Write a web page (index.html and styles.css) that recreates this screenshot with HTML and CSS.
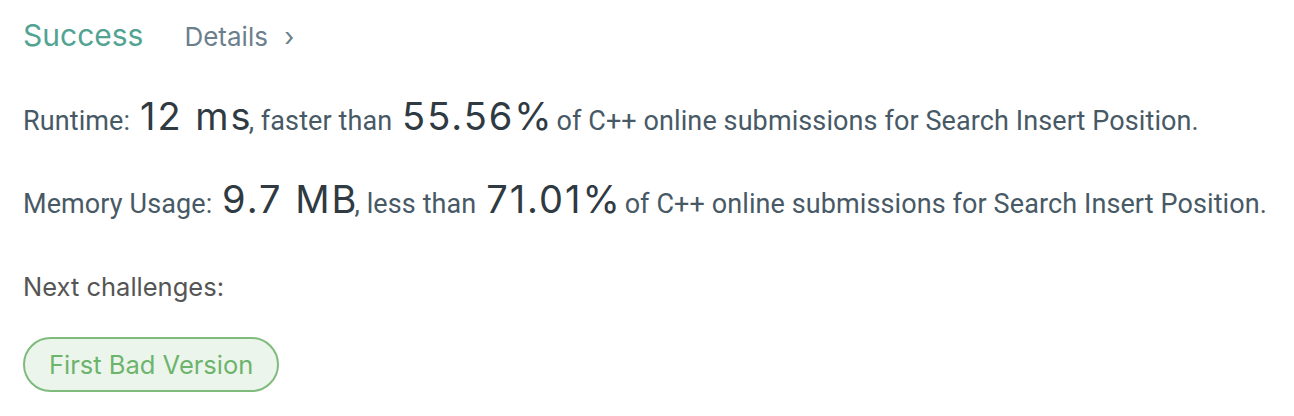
FILE: index.html
```html
<!DOCTYPE html>
<html>
<head>
<meta charset="utf-8">
<link rel="stylesheet" href="styles.css">
</head>
<body>
<div class="result">
  <div class="head">
    <span class="status">Success</span>
    <span class="details">Details <span class="chev">›</span></span>
  </div>
  <div class="stat">Runtime: <span class="num">12 ms</span>, faster than <span class="num">55.56%</span> of C++ online submissions for Search Insert Position.</div>
  <div class="stat">Memory Usage: <span class="num">9.7 MB</span>, less than <span class="num">71.01%</span> of C++ online submissions for Search Insert Position.</div>
  <div class="next">Next challenges:</div>
  <div class="tags"><span class="tag">First Bad Version</span></div>
</div>
</body>
</html>
```
FILE: styles.css
```css
html, body { margin: 0; background: #fff; }
.result { padding: 14px 23px; display: flex; flex-direction: column; align-items: flex-start; }
.head { display: flex; align-items: baseline; gap: 41px; height: 42px; }
.status { font-family: Inter, sans-serif; font-size: 30px; color: #52a392; line-height: 42px; }
.details { font-family: Inter, sans-serif; font-size: 26px; color: #6c7f8c; }
.chev { margin-left: 9px; }
.stat { font-family: Roboto, sans-serif; font-size: 27px; letter-spacing: 0.1px; color: #485966; margin-top: 38px; line-height: 45px; white-space: nowrap; }
.stat + .stat { margin-top: 33px; }
.num { font-family: Inter, sans-serif; font-size: 38px; letter-spacing: 2px; margin-left: 3px; margin-right: -4px; color: #2f3a42; }
.next { font-family: Inter, sans-serif; font-size: 25.5px; color: #555; margin-top: 44px; }
.tags { margin-top: 35px; }
.tag { display: inline-block; font-family: Inter, sans-serif; font-size: 25.5px; color: #6cb46c; background: #ecf5ec; border: 2px solid #80bb7e; border-radius: 28px; padding: 10px 24px; }
```
